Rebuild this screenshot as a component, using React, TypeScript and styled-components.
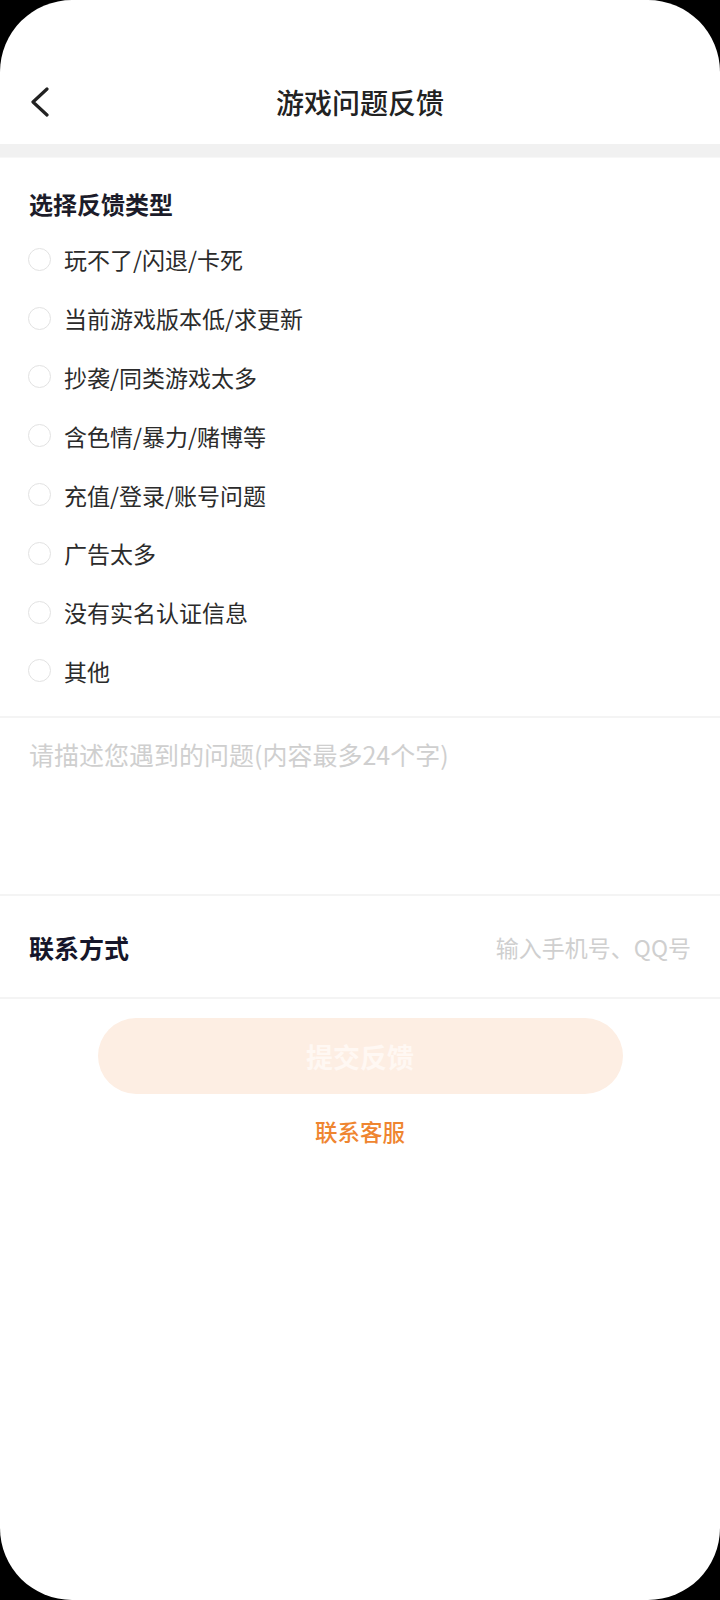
import React from 'react';
import styled, { createGlobalStyle } from 'styled-components';

const GlobalStyle = createGlobalStyle`
  html, body {
    margin: 0;
    padding: 0;
    background: #000;
  }

  * {
    box-sizing: border-box;
  }
`;

const Screen = styled.div`
  width: 720px;
  height: 1600px;
  background: #fff;
  border-radius: 72px;
  overflow: hidden;
  font-family: 'Noto Sans CJK SC', 'Noto Sans', sans-serif;
  display: flex;
  flex-direction: column;
`;

const NavBar = styled.header`
  margin-top: 60px;
  height: 84px;
  display: grid;
  grid-template-columns: 80px 1fr 80px;
  align-items: center;
`;

const BackButton = styled.button`
  border: 0;
  background: none;
  padding: 0 0 0 31px;
  height: 40px;
  display: flex;
  align-items: center;
  cursor: pointer;
`;

const Title = styled.h1`
  margin: 0;
  text-align: center;
  font-size: 28px;
  line-height: 36px;
  font-weight: 500;
  color: #222;
`;

const Band = styled.div`
  height: 14px;
  background: #f1f1f1;
  border-bottom: 1px solid #f7f7f7;
`;

const SectionTitle = styled.h2`
  margin: 30px 0 0 29px;
  font-size: 24px;
  line-height: 32px;
  font-weight: 700;
  color: #1c1c2a;
`;

const OptionList = styled.ul`
  list-style: none;
  margin: 10px 0 16px;
  padding: 0 28px;
`;

const OptionRow = styled.li`
  height: 58.8px;
  display: flex;
  align-items: center;
  gap: 13px;
  font-size: 23px;
  color: #2b2b2b;
`;

const Radio = styled.span`
  width: 23px;
  height: 23px;
  border-radius: 50%;
  border: 1.5px solid #e2e2e2;
  flex-shrink: 0;
`;

const Divider = styled.div`
  height: 2px;
  background: #f4f4f4;
`;

const Describe = styled.textarea`
  display: block;
  width: 100%;
  height: 176px;
  border: 0;
  resize: none;
  outline: none;
  padding: 20px 29px;
  font-family: inherit;
  font-size: 25px;
  line-height: 32px;
  color: #333;

  &::placeholder {
    color: #cfcfcf;
  }
`;

const ContactRow = styled.div`
  height: 101px;
  display: flex;
  align-items: center;
  justify-content: space-between;
  padding: 0 27px 0 29px;
`;

const ContactLabel = styled.span`
  font-size: 25px;
  font-weight: 700;
  color: #16162a;
`;

const ContactInput = styled.input`
  border: 0;
  outline: none;
  text-align: right;
  width: 320px;
  font-family: inherit;
  font-size: 23px;
  color: #333;

  &::placeholder {
    color: #cfcfcf;
  }
`;

const SubmitButton = styled.button`
  display: block;
  margin: 19px auto 0;
  width: 525px;
  height: 76px;
  border: 0;
  border-radius: 38px;
  background: #fdeee3;
  color: #fff8f3;
  font-family: inherit;
  font-size: 27px;
  font-weight: 700;
`;

const ServiceLink = styled.a`
  display: block;
  margin-top: 22px;
  text-align: center;
  font-size: 22.5px;
  line-height: 30px;
  font-weight: 500;
  color: #ef8530;
  text-decoration: none;
`;

const options = [
  '玩不了/闪退/卡死',
  '当前游戏版本低/求更新',
  '抄袭/同类游戏太多',
  '含色情/暴力/赌博等',
  '充值/登录/账号问题',
  '广告太多',
  '没有实名认证信息',
  '其他',
];

const BackIcon = () => (
  <svg width="18" height="30" viewBox="0 0 18 30" fill="none">
    <polyline points="16,2 2,15 16,28" stroke="#222" strokeWidth="3.2" strokeLinecap="round" strokeLinejoin="round" />
  </svg>
);

const App: React.FC = () => (
  <>
    <GlobalStyle />
    <Screen>
      <NavBar>
        <BackButton aria-label="返回">
          <BackIcon />
        </BackButton>
        <Title>游戏问题反馈</Title>
        <span />
      </NavBar>
      <Band />
      <SectionTitle>选择反馈类型</SectionTitle>
      <OptionList>
        {options.map((text) => (
          <OptionRow key={text}>
            <Radio />
            {text}
          </OptionRow>
        ))}
      </OptionList>
      <Divider />
      <Describe placeholder="请描述您遇到的问题(内容最多24个字)" />
      <Divider />
      <ContactRow>
        <ContactLabel>联系方式</ContactLabel>
        <ContactInput placeholder="输入手机号、QQ号" />
      </ContactRow>
      <Divider />
      <SubmitButton>提交反馈</SubmitButton>
      <ServiceLink href="#">联系客服</ServiceLink>
    </Screen>
  </>
);

export default App;
